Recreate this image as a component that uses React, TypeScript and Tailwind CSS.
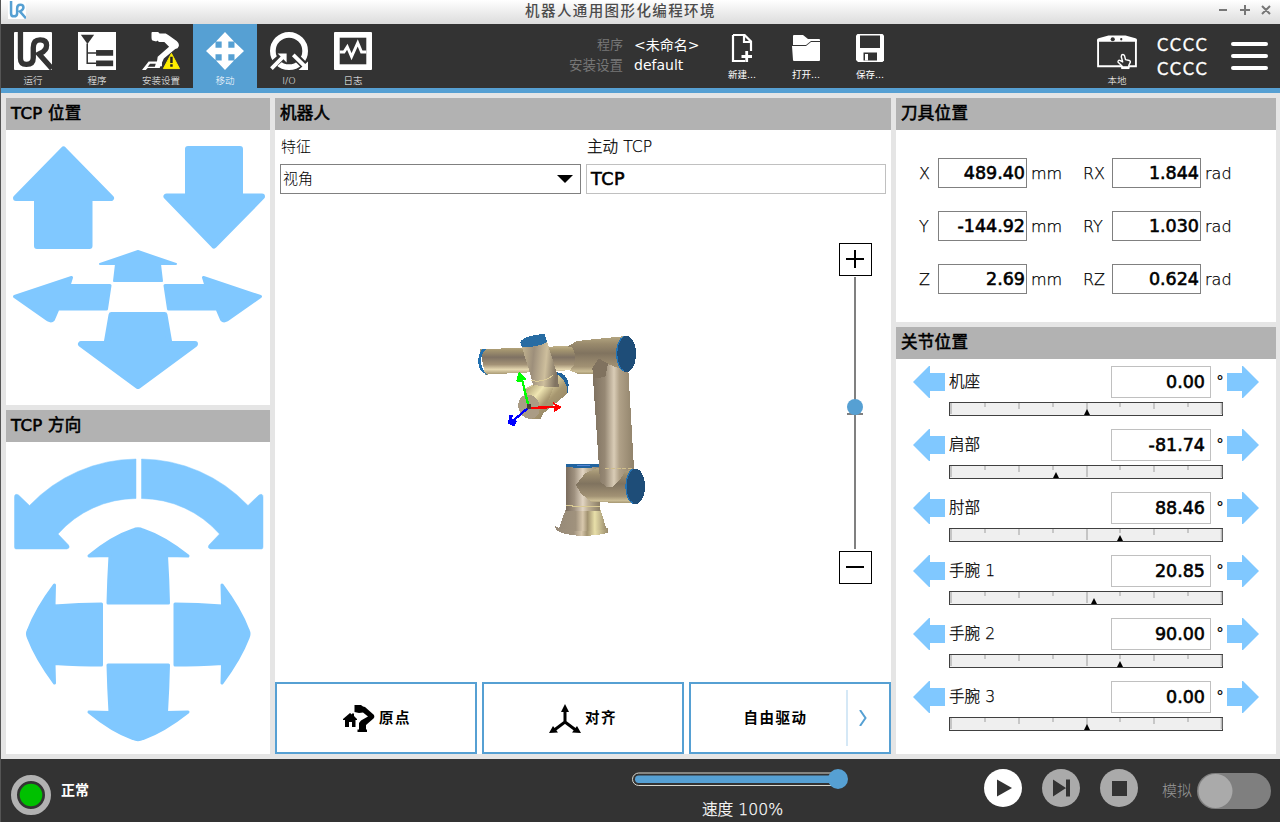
import type { ReactNode } from "react";

const SKY = "#80c8ff";

function UrMark({ fg, bg, className }: { fg: string; bg: string; className: string }) {
  return (
    <svg viewBox="0 0 40 40" className={className}>
      <rect width="40" height="40" rx="1" fill={bg} />
      <path
        d="M6.8 0V27.5Q6.8 34 13 34Q20.3 34 20.3 27V16.5Q20.3 8.3 27.5 8.3Q34.3 8.3 34.3 14Q34.3 19.5 28 22.3L26.3 23.2L40 38.5"
        fill="none"
        stroke={fg}
        strokeWidth="5.6"
      />
    </svg>
  );
}

function ProgramIcon() {
  return (
    <svg viewBox="0 0 40 40" className="size-10">
      <rect width="40" height="40" fill="#fff" />
      <path d="M3 3H17L10 12.5Z" fill="#333" />
      <path d="M9.7 12V33H19M9.7 22H19" fill="none" stroke="#333" strokeWidth="1.6" />
      <rect x="19" y="19" width="18" height="6" fill="#333" />
      <rect x="19" y="30" width="18" height="6" fill="#333" />
    </svg>
  );
}

function InstallIcon() {
  return (
    <svg viewBox="0 0 40 40" className="size-10">
      <path d="M10 1.5Q10 -0.5 12 -0.5L17 0L18.500 1.700L25 1.500L28 3.500L36.500 9.500Q39.500 12 38.700 15Q38 17.500 35 18L23 28L18.500 38L15 36L16.500 26L28.500 15.500L23.500 10.500H18L16 9L15 10L11 9Q10 8 10 6Z" fill="#fff" />
      <path d="M7 31H16.500L21 32V36H18.500V38H6L4 40H0Z" fill="#fff" />
      <path d="M6 36.500L8.500 33.500H14.500L13.500 36.500Z" fill="#333" />
      <path d="M31 22.500L39.500 38.500H22.500Z" fill="#ffee00" stroke="#ffee00" strokeLinejoin="round" />
      <path d="M31 26V32.5M31 34V36.5" stroke="#222" strokeWidth="2.6" />
    </svg>
  );
}

function MoveIcon() {
  return (
    <svg viewBox="0 0 40 40" className="size-10">
      <path d="M20 0L29.5 10H23.500V16.500H30V10.500L40 20L30 29.5V23.500H23.500V30H29.5L20 40L10.500 30H16.500V23.500H10V29.5L0 20L10 10.500V16.500H16.500V10H10.500Z" fill="#fff" />
    </svg>
  );
}

function IoIcon() {
  return (
    <svg viewBox="0 0 40 40" className="size-10">
      <circle cx="20" cy="20" r="17" fill="none" stroke="#fff" strokeWidth="6" />
      <path d="M-1 38L15 24M24 23L38 37" stroke="#333" strokeWidth="8" />
      <path d="M1.500 38.500L14 26M24.500 24L37 36.500" stroke="#fff" strokeWidth="4" />
      <path d="M8 22.500H17.500V32ZM40 31V40H30Z" fill="#fff" />
    </svg>
  );
}

function LogIcon() {
  return (
    <svg viewBox="0 0 40 40" className="size-10">
      <rect width="40" height="40" rx="1" fill="#fff" />
      <rect x="6" y="6" width="28" height="28" fill="#333" />
      <path d="M6 21H10.500L14 15.500L18.500 26L25 11.500L29 21H34" fill="none" stroke="#fff" strokeWidth="3" />
    </svg>
  );
}

const TABS: { label: string; icon: ReactNode; active?: boolean }[] = [
  { label: "运行", icon: <UrMark fg="#333" bg="#fff" className="size-10" /> },
  { label: "程序", icon: <ProgramIcon /> },
  { label: "安装设置", icon: <InstallIcon /> },
  { label: "移动", icon: <MoveIcon />, active: true },
  { label: "I/O", icon: <IoIcon /> },
  { label: "日志", icon: <LogIcon /> },
];

function TitleBar() {
  return (
    <div className="grid h-6 shrink-0 grid-cols-[1fr_auto_1fr] items-center bg-linear-to-b from-white to-[#dcdcdc]">
      <UrMark fg="#56a0d3" bg="#fff" className="-mt-1 ml-[7px] size-[18px]" />
      <div className="-mt-[3px] pr-[40px] text-[14.500px] leading-5 font-medium tracking-[1.400px] whitespace-nowrap text-[#4c4c4c]">机器人通用图形化编程环境</div>
      <svg viewBox="0 0 58 12" className="-mt-1 mr-[3px] h-3 w-[58px] justify-self-end" fill="none" stroke="#777" strokeWidth="2">
        <path d="M-4 6H5M18 6H28M23 1V11M40 2L48 10M48 2L40 10" transform="translate(3 0)" />
      </svg>
    </div>
  );
}

function FileButton({ label, children }: { label: string; children: ReactNode }) {
  return (
    <div className="flex w-16 flex-col items-center pt-[10px]">
      <svg viewBox="0 0 28 28" className="size-7">{children}</svg>
      <div className="mt-[6px] text-[9.500px] leading-[14px] text-white">{label}</div>
    </div>
  );
}

function Header() {
  return (
    <div className="flex h-[69px] shrink-0 border-b-[5px] border-[#56a0d3] bg-[#333] text-white">
      {TABS.map((t) => (
        <div key={t.label} className={`flex w-16 flex-col items-center pt-2 ${t.active ? "bg-[#56a0d3]" : ""}`}>
          {t.icon}
          <div className="mt-1 text-[9.500px] leading-[14px] font-light whitespace-nowrap">{t.label}</div>
        </div>
      ))}
      <div className="grid w-[325px] shrink-0 grid-cols-[238px_1fr] content-start gap-x-[11px] pt-[11px] text-sm leading-5 whitespace-nowrap">
        <span className="text-right text-[13px] text-[#777]">程序</span>
        <span>&lt;未命名&gt;</span>
        <span className="text-right text-[13.500px] text-[#777]">安装设置</span>
        <span>default</span>
      </div>
      <FileButton label="新建...">
        <path d="M5 1H16.500L23 7.500V17M17 27H5V1M16 1V8H23" fill="none" stroke="#fff" strokeWidth="2.200" />
        <path d="M18.700 17V28M13.500 22.500H24" stroke="#fff" strokeWidth="2.800" />
      </FileButton>
      <FileButton label="打开...">
        <path d="M1 10V2Q1 1 2 1H11L16 5H27Q28 5 28 6V7H19L14 11H1Z" fill="#fff" />
        <path d="M0 12H14L19 8H28V26Q28 27 27 27H2Q1 27 1 26Z" fill="#fff" />
      </FileButton>
      <FileButton label="保存...">
        <path d="M1.500 0H26.500L28 1.500V26.500L26.500 28H2L0 26V1.500Z" fill="#fff" />
        <rect x="4" y="1.500" width="20" height="12.500" fill="#333" />
        <rect x="7.500" y="18.500" width="13.500" height="8" fill="#333" />
        <rect x="9" y="20" width="3" height="6.500" fill="#fff" />
      </FileButton>
      <div className="ml-auto flex w-[60px] flex-col items-center pt-[11px]">
        <svg viewBox="0 0 42 37" className="h-[37px] w-[42px]">
          <path d="M1 33V6H41V33Z" fill="none" stroke="#fff" strokeWidth="2" />
          <path d="M0 7V5Q0 4 1.500 3.500L12 0.500H30L40.500 3.500Q42 4 42 5V7Z" fill="#fff" />
          <circle cx="16.500" cy="4.500" r="2.200" fill="#333" />
          <circle cx="25.500" cy="4.500" r="1.200" fill="#333" />
          <path d="M26 21Q28 20 29 22L30 26L34 27Q35.500 27.500 35 29L33.500 32V35H26.500V33L22 28.500Q22.500 26 24.500 27L27 28.500L25.500 23Z" fill="#333" stroke="#fff" strokeWidth="1.500" strokeLinejoin="round" />
          <path d="M25.500 34.500H34" stroke="#fff" strokeWidth="3" />
        </svg>
        <div className="mt-1 text-[9.500px] leading-[14px] font-light">本地</div>
      </div>
      <div className="ml-[10px] flex w-[52px] flex-col pt-[9px] font-['Lato','Noto_Sans_CJK_SC',sans-serif] text-[17px] leading-6 tracking-[1.700px] [-webkit-text-stroke:0.3px]">
        <span>CCCC</span>
        <span>CCCC</span>
      </div>
      <div className="mr-3 ml-[22px] flex w-[37px] shrink-0 flex-col gap-[8px] pt-[18px]">
        <i className="h-[4px] rounded-sm bg-white" />
        <i className="h-[4px] rounded-sm bg-white" />
        <i className="h-[4px] rounded-sm bg-white" />
      </div>
    </div>
  );
}

function Panel({ title, className, children }: { title: string; className: string; children: ReactNode }) {
  return (
    <section className={`flex flex-col bg-white ${className}`}>
      <h2 className="h-8 shrink-0 bg-[#b2b2b2] pl-[5px] text-[16.500px] leading-8 tracking-[0.300px] text-black [-webkit-text-stroke:0.6px]">{title}</h2>
      {children}
    </section>
  );
}

function PositionArrows() {
  return (
    <svg viewBox="6 130 264 275" className="h-[275px] w-[264px]" fill={SKY} stroke={SKY} strokeLinejoin="round">
      <g strokeWidth="6">
        <path d="M63.500 149.500L111 198H89.500V246H37V198H16Z" />
        <path d="M188 149H240V196.500H262L214 245.500L166.500 196.500H188Z" />
        <path d="M111.500 315H164.500L169.500 344H195L138 386L81 344H106.500Z" />
      </g>
      <g strokeWidth="2">
        <path d="M138 251L176 264H160L162 281H114L116 264H100Z" />
      </g>
      <g strokeWidth="3">
        <path d="M14.500 296.500L71.500 277.500L69 285.500H110L106.500 309H58L53.500 319.500Q51.500 322 48 320Z" />
        <path d="M260.500 296.500L203.500 277.500L206 285.500H165L168.500 309H217L221.500 319.500Q223.500 322 227 320Z" />
      </g>
    </svg>
  );
}

function OrientationArrows() {
  return (
    <svg viewBox="6 442 264 312" className="h-[312px] w-[264px]" fill={SKY} stroke={SKY} strokeLinejoin="round">
      <g strokeWidth="0.500">
        <path d="M136 459A148.700 148.700 0 0 0 29.500 505.500L18.500 495Q14.500 493 14.500 497V547Q14.500 549 16 549H67Q70.500 548 68.500 545L58 534A104.800 104.800 0 0 1 136 498.500Z" />
        <path d="M141.500 459A148.700 148.700 0 0 1 248 505.500L259 495Q263 493 263 497V547Q263 549 261.500 549H210.500Q207 548 209 545L219.500 534A104.800 104.800 0 0 0 141.500 498.500Z" />
      </g>
      <g strokeWidth="3">
        <path d="M133 530Q138 527.500 143 530Q164 537 188 556L166.500 555.500Q168 580 168.500 603H108Q108.500 580 110 555.500L89 556Q112 537 133 530Z" />
        <path d="M133 738.500Q138 741 143 738.500Q164 731 188 712L166.500 712.500Q168 688 168.500 665H108Q108.500 688 110 712.500L89 712Q112 731 133 738.500Z" />
        <path d="M28.500 630Q26.500 634 28.500 638Q36.500 659 54.500 683L54 663.500Q80 665 101.500 665V604Q80 604 54 606L54.500 585Q36.500 609 28.500 630Z" />
        <path d="M248 630Q250 634 248 638Q240 659 222 683L222.500 663.500Q197 665 175 665V604Q197 604 222.500 606L222 585Q240 609 248 630Z" />
      </g>
    </svg>
  );
}

function RobotArm() {
  return (
    <svg viewBox="0 0 600 690" className="h-[230px] w-[200px]">
      <defs>
        <linearGradient id="h" x1="0" x2="1" y1="0" y2="0">
          <stop offset="0" stopColor="#7a6c5d" /><stop offset=".25" stopColor="#9f917f" /><stop offset=".5" stopColor="#e2d5c3" /><stop offset=".65" stopColor="#c0b297" /><stop offset="1" stopColor="#8c7f67" />
        </linearGradient>
        <linearGradient id="u" x1="0" x2="1" y1="0" y2="0">
          <stop offset="0" stopColor="#7d705f" /><stop offset=".3" stopColor="#968874" /><stop offset=".52" stopColor="#d9ccb6" /><stop offset=".65" stopColor="#b0a188" /><stop offset="1" stopColor="#8f8169" />
        </linearGradient>
        <linearGradient id="v" x1="0" x2="0" y1="0" y2="1">
          <stop offset="0" stopColor="#c4b58c" /><stop offset=".15" stopColor="#a59670" /><stop offset=".4" stopColor="#7f7263" /><stop offset=".65" stopColor="#a39276" /><stop offset=".82" stopColor="#e5d8b1" /><stop offset="1" stopColor="#a1926d" />
        </linearGradient>
        <linearGradient id="s" x1="0" x2="0" y1="0" y2="1">
          <stop offset="0" stopColor="#b7a983" /><stop offset=".2" stopColor="#9a8b6d" /><stop offset=".45" stopColor="#80735f" /><stop offset=".8" stopColor="#a29274" /><stop offset=".92" stopColor="#cabc95" /><stop offset="1" stopColor="#a1926d" />
        </linearGradient>
        <linearGradient id="w" x1="0" x2="1" y1="0" y2=".12">
          <stop offset="0" stopColor="#c5b691" /><stop offset=".35" stopColor="#9d8f7b" /><stop offset=".7" stopColor="#cebf9d" /><stop offset="1" stopColor="#817462" />
        </linearGradient>
        <linearGradient id="b" x1="0" x2="1" y1="0" y2="0">
          <stop offset="0" stopColor="#978a78" /><stop offset=".35" stopColor="#a0927d" /><stop offset=".5" stopColor="#d8c8ad" /><stop offset=".6" stopColor="#a29371" /><stop offset=".75" stopColor="#e8dfa9" /><stop offset="1" stopColor="#97896b" />
        </linearGradient>
        <linearGradient id="e" x1="0" y1="0" x2="1" y2="1">
          <stop offset="0" stopColor="#9f9168" /><stop offset=".35" stopColor="#efe5b2" /><stop offset=".6" stopColor="#a79770" /><stop offset="1" stopColor="#867860" />
        </linearGradient>
      </defs>
      <g shapeRendering="crispEdges">
        <path d="M285 618L298 624H445V638Q420 646 370 648Q310 646 288 630Z" fill="url(#b)" />
        <path d="M318 565H420L440 628Q370 640 297 625Z" fill="url(#b)" />
        <path d="M318 438H419V572H318Z" fill="url(#h)" />
        <path d="M318 555Q365 565 419 558" fill="none" stroke="#d9ca94" strokeWidth="3" />
        <path d="M318 433Q367 430 417 433V440Q367 448 318 440Z" fill="#20639f" />
        <path d="M350 437H390" stroke="#5585d6" strokeWidth="4" />
        <path d="M348 495L375 460L415 443L522 447V550L395 546L362 520Z" fill="url(#s)" />
        <ellipse cx="526" cy="499" rx="29" ry="53" fill="#1e4d78" />
        <path d="M519 447Q498 460 498 500Q499 540 519 550" fill="none" stroke="#2673b4" strokeWidth="4" />
        <path d="M397 145L415 116L505 150L522 446L495 455L480 480L460 500H440L420 485Z" fill="url(#u)" />
        <path d="M436 446H522" stroke="#d0bf8c" strokeWidth="3" strokeDasharray="12 5" />
        <path d="M60 88L345 77V150L75 164Z" fill="url(#v)" />
        <path d="M80 87H68Q53 100 55 130Q58 155 80 164Q62 145 63 120Q64 100 80 87Z" fill="#2170b0" />
        <path d="M323 80L350 63L498 48L500 154L444 132L416 115L398 150V163H355L330 151L342 135Q350 100 336 82Z" fill="url(#s)" />
        <path d="M436 171L444 131L416 115L397 145L400 175Z" fill="#80725f" />
        <ellipse cx="499" cy="102" rx="29" ry="54" fill="#1e4d78" />
        <path d="M491 49Q469 65 470 104Q473 145 491 153" fill="none" stroke="#2475b7" strokeWidth="4" />
        <path d="M287 157Q320 157 326 193L323 218L306 220Z" fill="#20629b" />
        <path d="M285 160Q310 170 322 203L320 222L256 276L220 290L195 205Z" fill="url(#e)" />
        <path d="M185 79L261 65L294 170L296 200L265 201L240 198L220 197L207 150Z" fill="url(#w)" />
        <path d="M214 181Q245 190 278 167" fill="none" stroke="#dccd99" strokeWidth="3" />
        <path d="M195 210L225 195L280 205L248 285L240 298L216 296Z" fill="url(#e)" />
        <ellipse cx="207" cy="260" rx="32" ry="37" transform="rotate(-22 207 260)" fill="#aa9c85" />
        <path d="M180 67Q190 47 253 42L261 65Q239 82 187 82Z" fill="#286ca3" />
      </g>
      <g fill="none" strokeWidth="7" shapeRendering="crispEdges">
        <path d="M206 261L185 174" stroke="#0f0" />
        <path d="M205 264L290 261" stroke="#f00" />
        <path d="M204 264L157 304" stroke="#00f" />
      </g>
      <g shapeRendering="crispEdges">
        <path d="M177 155L200 176L196 182L188 180L180 187L168 184Z" fill="#0f0" />
        <path d="M306 261L276 245L284 257L273 262L284 266L281 277Z" fill="#f00" />
        <path d="M143 311L149 284L158 286L157 298L171 302L163 320Z" fill="#00f" />
        <rect x="200" y="253" width="14" height="15" fill="#4b4433" />
      </g>
    </svg>
  );
}

function ZoomControl() {
  return (
    <svg viewBox="839 243 33 341" className="h-[341px] w-[33px]" fill="none">
      <rect x="839.500" y="243.500" width="32" height="32" stroke="#000" />
      <path d="M846 259H864M855 250V268M846 567H864" stroke="#000" strokeWidth="2" />
      <path d="M855 277V549M847 414H863" stroke="#808080" strokeWidth="2" />
      <circle cx="855" cy="407" r="8" fill="#56a0d3" />
      <rect x="839.500" y="551.500" width="32" height="32" stroke="#000" />
    </svg>
  );
}

function RobotPanel() {
  return (
    <Panel title="机器人" className="w-[616px] shrink-0">
      <div className="grid grid-cols-[301px_300px] gap-x-[5px] pt-[7px] pl-[5px] text-[15px] leading-5">
        <label className="pl-[1px] font-light">特征</label>
        <label className="pl-[1px] text-[15.600px] font-extralight [-webkit-text-stroke:0.25px]">主动 TCP</label>
        <div className="mt-[7px] flex h-[30px] items-center justify-between border border-[#808080] pr-[7px] pl-[2px]">
          <span className="font-light">视角</span>
          <svg viewBox="0 0 16 8" className="h-2 w-4"><path d="M0 0H16L8 8Z" /></svg>
        </div>
        <div className="mt-[7px] flex h-[30px] items-center border border-[#c0c0c0] pl-1 text-[17.500px] tracking-[0.500px] [-webkit-text-stroke:0.6px]">TCP</div>
      </div>
      <div className="flex flex-1 items-start">
        <div className="mt-[126px] ml-[185px]"><RobotArm /></div>
        <div className="mt-[49px] ml-[179px]"><ZoomControl /></div>
      </div>
      <div className="flex h-[72px] shrink-0 gap-[5px] text-[14.500px] font-bold tracking-[1.500px]">
        <button className="flex w-[202px] items-center justify-center gap-1 border-2 border-[#56a0d3] pt-[1px] pl-[2px]">
          <svg viewBox="0 0 32 27" className="h-[27px] w-8">
            <path d="M0 14L7 8L9 9.500V8.500H11V11L14 14V15H12.500V22H9V17H6V22H2V15H0Z" />
            <path d="M11.500 0H18L20 1.500L22 2L31 10Q32 12 30.500 13.500L23 20V24.500H24V27H14.500V24.500H16V18L18 15.500L25 11.500L20 7.500L16 8L11.500 7Z" />
          </svg>
          原点
        </button>
        <button className="flex w-[202px] items-center justify-center gap-1 border-2 border-[#56a0d3] pt-[1px]">
          <svg viewBox="0 0 32 30" className="h-[30px] w-8">
            <path d="M16 5V18L4 27M16 18L28 27" fill="none" stroke="#000" strokeWidth="3" />
            <path d="M16 0L20 8H12ZM0 29L4 22L9 28.500ZM32 29L28 22L23 28.500Z" />
          </svg>
          对齐
        </button>
        <button className="flex w-[202px] items-center border-2 border-[#56a0d3]">
          <span className="flex-1 pt-[1px] pl-[14px] text-center">自由驱动</span>
          <span className="flex h-14 w-[43px] items-center border-l-2 border-[#d5e8f6] pl-[11px]">
            <svg viewBox="0 0 8 16" className="h-4 w-2"><path d="M1 0L6.500 8L1 16" fill="none" stroke="#56a0d3" strokeWidth="2" /></svg>
          </span>
        </button>
      </div>
    </Panel>
  );
}

const POSE = [
  ["X", "489.40", "RX", "1.844"],
  ["Y", "-144.92", "RY", "1.030"],
  ["Z", "2.69", "RZ", "0.624"],
];

function PoseValue({ children }: { children: ReactNode }) {
  return (
    <span className="h-[30px] w-[89px] border border-[#808080] pr-[1px] text-right text-[17.500px] leading-[29px] font-normal [-webkit-text-stroke:0.6px]">{children}</span>
  );
}

function ToolPanel() {
  return (
    <Panel title="刀具位置" className="h-[224px]">
      <div className="flex flex-col gap-[23px] pt-7 pl-[23px]">
        {POSE.map(([a, av, r, rv]) => (
          <div key={a} className="flex h-[30px] text-[16px] leading-[31px] font-extralight [-webkit-text-stroke:0.25px]">
            <span className="w-[19px]">{a}</span>
            <PoseValue>{av}</PoseValue>
            <span className="w-[57px] pl-1">mm</span>
            <span className="-ml-[1px] w-[29px]">{r}</span>
            <PoseValue>{rv}</PoseValue>
            <span className="pl-1">rad</span>
          </div>
        ))}
      </div>
    </Panel>
  );
}

const JOINTS = [
  { name: "机座", value: 0 },
  { name: "肩部", value: -81.74 },
  { name: "肘部", value: 88.46 },
  { name: "手腕 1", value: 20.85 },
  { name: "手腕 2", value: 90 },
  { name: "手腕 3", value: 0 },
];

function JointGauge({ value }: { value: number }) {
  const x = Math.floor(138 + (value / 363) * 137);
  return (
    <svg viewBox="0 0 274 14" className="h-[14px] w-[274px]">
      <rect x="0.500" y="0.500" width="273" height="13" fill="#efefef" stroke="#404040" />
      <path d="M2 1V12M138 1V12M272.500 1V12" stroke="#bbb" strokeWidth="1.600" />
      <path d="M36 1V5M104 1V5M171 1V5M239 1V5" stroke="#bbb" strokeWidth="1.500" />
      <path d="M70 1V7M205 1V7" stroke="#bbb" strokeWidth="1.500" />
      <path d={`M${x} 7L${x + 3} 13H${x - 3}Z`} />
    </svg>
  );
}

function JointPanel() {
  return (
    <Panel title="关节位置" className="flex-1">
      <div className="flex flex-col gap-[13px] pt-[7px] pl-[17px]">
        {JOINTS.map((j) => (
          <div key={j.name} className="h-[50px]">
            <div className="flex h-8 items-center">
              <svg viewBox="0 0 32 32" className="size-8"><path d="M0 16L16 0H17V7H32V25H17V32H16Z" fill={SKY} /></svg>
              <span className="w-[166px] pl-1 text-[15.600px] leading-5 font-extralight [-webkit-text-stroke:0.25px]">{j.name}</span>
              <span className="h-8 w-[100px] border border-[#c0c0c0] pr-[5px] text-right text-[17.500px] leading-[31px] [-webkit-text-stroke:0.6px]">{j.value.toFixed(2)}</span>
              <span className="w-4 pl-[5px] text-base leading-5 font-extralight [-webkit-text-stroke:0.4px]">°</span>
              <svg viewBox="0 0 32 32" className="size-8"><path d="M32 16L16 0H15V7H0V25H15V32H16Z" fill={SKY} /></svg>
            </div>
            <div className="mt-1 ml-9"><JointGauge value={j.value} /></div>
          </div>
        ))}
      </div>
    </Panel>
  );
}

function Footer() {
  return (
    <div className="flex h-[63px] shrink-0 bg-[#333] text-white">
      <div className="flex w-[631px] items-start pt-4 pl-[10px]">
        <svg viewBox="0 0 40 40" className="size-10">
          <circle cx="20" cy="20" r="17" fill="#333" stroke="#b2b2b2" strokeWidth="6" />
          <circle cx="20" cy="20" r="11.300" fill="#00c000" />
        </svg>
        <span className="pt-[5px] pl-[10px] text-[14px] leading-5 font-bold">正常</span>
      </div>
      <div className="flex w-[217px] flex-col items-center pt-[10px]">
        <svg viewBox="0 0 217 20" className="h-5 w-[217px]">
          <rect x="0.500" y="4" width="212" height="12.500" rx="6.200" fill="none" stroke="#d8d8d0" />
          <rect x="3" y="6.500" width="205" height="7.500" rx="3.700" fill="#56a0d3" />
          <circle cx="206" cy="10" r="10" fill="#56a0d3" />
        </svg>
        <span className="mt-[11px] pl-[4px] text-[15.700px] leading-5 font-extralight [-webkit-text-stroke:0.25px]">速度 100%</span>
      </div>
      <div className="flex gap-5 pt-[10px] pl-[135px]">
        <svg viewBox="0 0 38 38" className="size-[38px]"><circle cx="19" cy="19" r="19" fill="#fff" /><path d="M13 10.500V27.500L28 19Z" fill="#333" /></svg>
        <svg viewBox="0 0 38 38" className="size-[38px]"><circle cx="19" cy="19" r="19" fill="#aaa" /><path d="M11 10.500V27.500L24 19ZM24 10.500H28V27.500H24Z" fill="#333" /></svg>
        <svg viewBox="0 0 38 38" className="size-[38px]"><circle cx="19" cy="19" r="19" fill="#aaa" /><path d="M12 12H27V27H12Z" fill="#333" /></svg>
      </div>
      <div className="flex items-start pl-6">
        <span className="w-[35px] pt-[22px] text-[15px] leading-5 font-light text-[#999]">模拟</span>
        <svg viewBox="0 0 74 36" className="mt-[14px] h-9 w-[74px]">
          <rect width="74" height="36" rx="18" fill="#7f7f7f" />
          <circle cx="18.500" cy="18" r="17" fill="#aaa" />
        </svg>
      </div>
    </div>
  );
}

export default function App() {
  return (
    <div className="flex h-[822px] w-[1280px] flex-col overflow-hidden border-l border-[#555] bg-[#e5e5e5] font-['DejaVu_Sans','Noto_Sans_CJK_SC',sans-serif] text-black">
      <TitleBar />
      <Header />
      <main className="flex flex-1 gap-[5px] pt-[5px] pr-1 pb-[5px] pl-[5px]">
        <div className="flex w-[264px] shrink-0 flex-col gap-[5px]">
          <Panel title="TCP 位置" className="h-[307px]"><PositionArrows /></Panel>
          <Panel title="TCP 方向" className="flex-1"><OrientationArrows /></Panel>
        </div>
        <RobotPanel />
        <div className="flex w-[380px] shrink-0 flex-col gap-[5px]">
          <ToolPanel />
          <JointPanel />
        </div>
      </main>
      <Footer />
    </div>
  );
}
